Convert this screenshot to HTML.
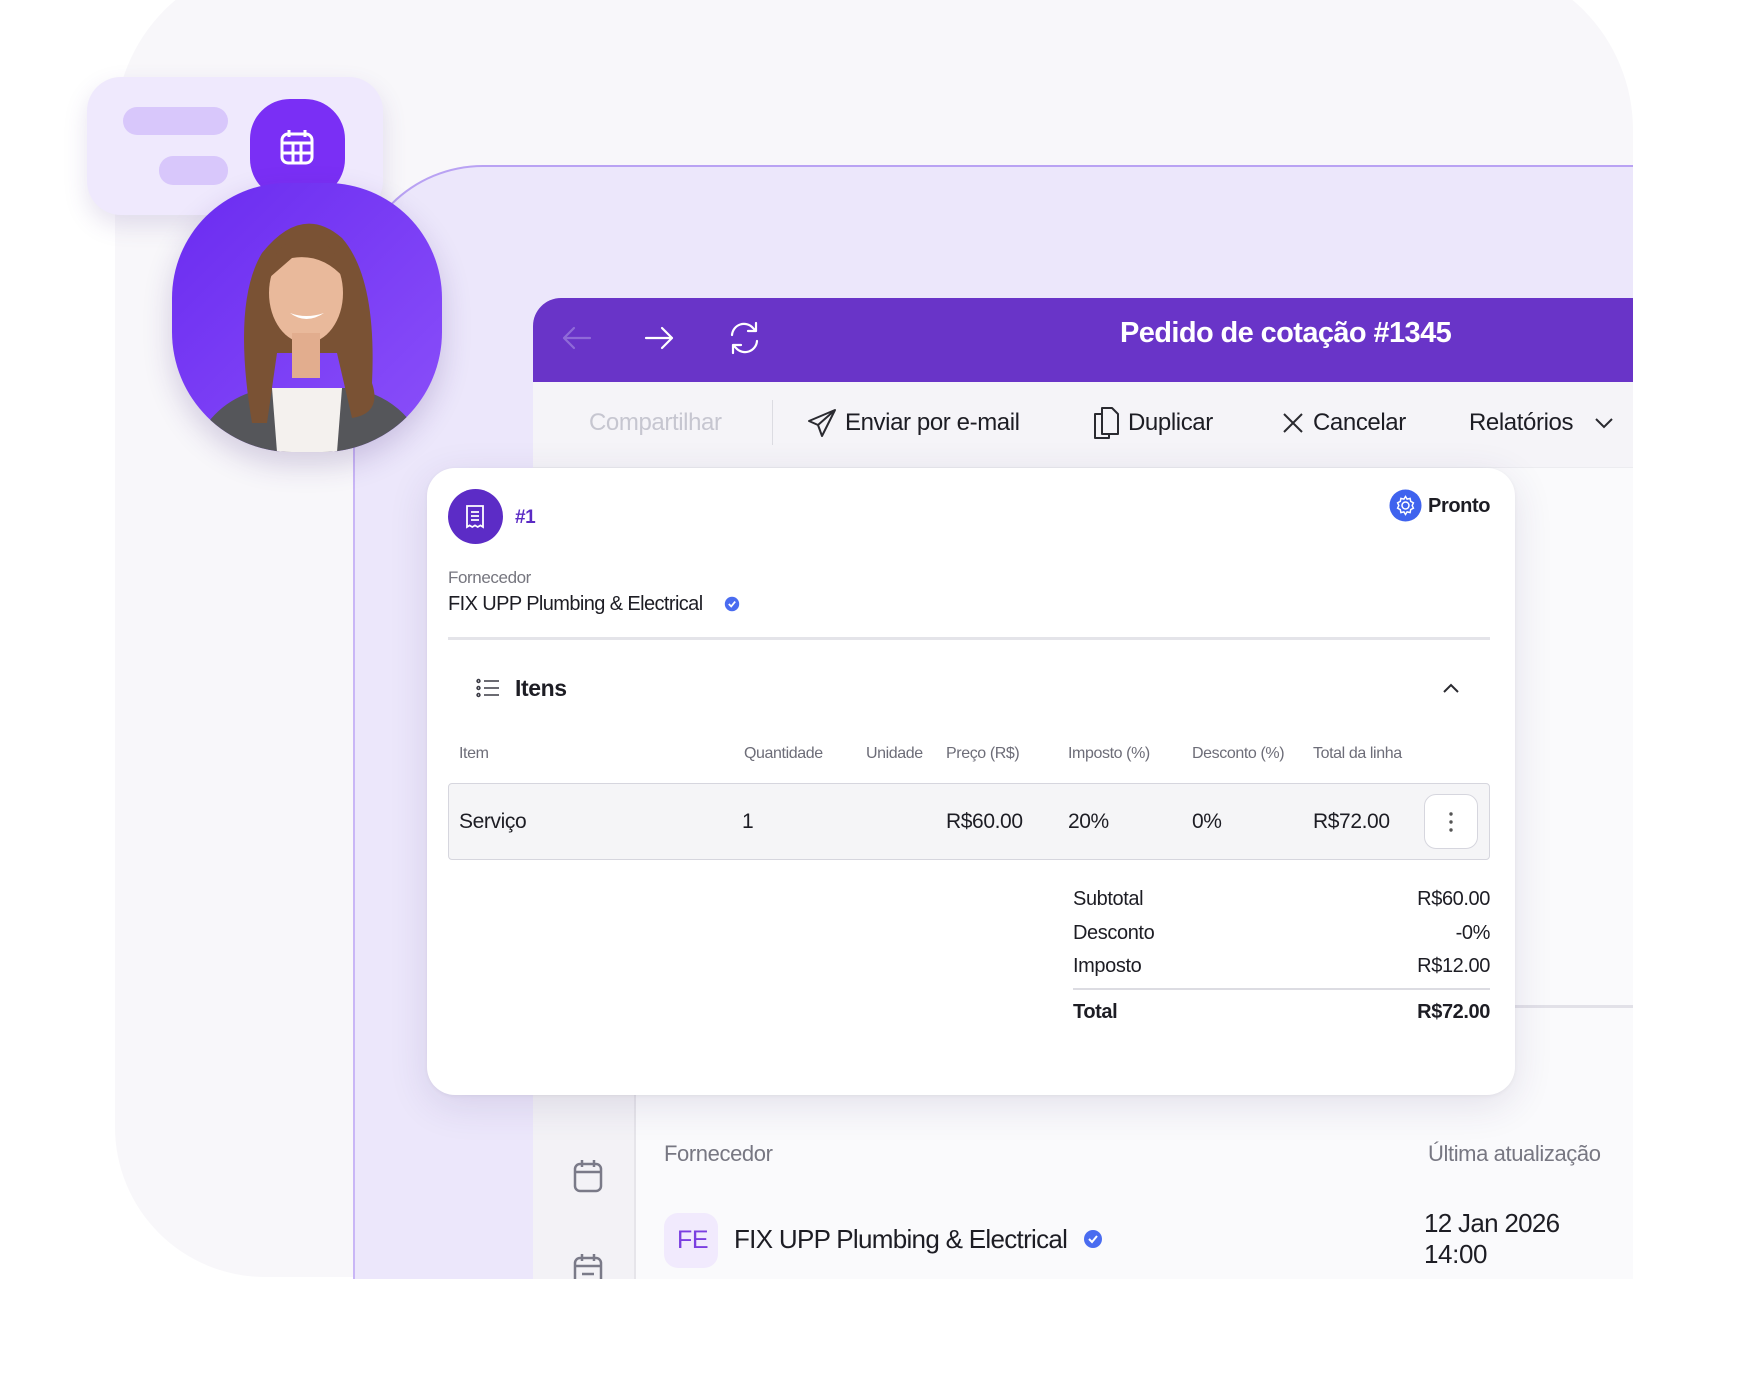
<!DOCTYPE html>
<html><head><meta charset="utf-8">
<style>
*{margin:0;padding:0;box-sizing:border-box}
html{width:1760px;height:1386px;overflow:hidden}
body{width:1760px;height:1386px;background:#fff;position:relative;overflow:hidden;font-family:"Liberation Sans",sans-serif;color:#1d1d24;letter-spacing:-0.4px}
.a{position:absolute}
.t{position:absolute;white-space:nowrap;line-height:1}
.w{position:absolute;left:0;top:0;width:1760px;height:0}
</style></head><body>
<div class="a" style="left:115px;top:-40px;width:1518px;height:1317px;background:#f8f7fa;border-radius:170px 170px 0 150px"></div>
<div class="a" style="left:353px;top:165px;width:1280px;height:1114px;background:#ece7fb;border-top:2px solid #b9a2f3;border-left:2px solid #c9b6f6;border-radius:130px 0 0 0"></div>
<div class="a" style="left:533px;top:298px;width:1100px;height:981px;background:#fafafc;border-radius:28px 0 0 0;overflow:hidden">
  <div class="a" style="left:0;top:0;width:1100px;height:84px;background:#6934c8"></div>
  <div class="a" style="left:0;top:84px;width:1100px;height:86px;background:#f5f4f8;border-bottom:1px solid #ececf0"></div>
  <div class="a" style="left:0;top:170px;width:103px;height:811px;background:#f3f2f6;border-right:2px solid #e6e5ea"></div>
  <div class="a" style="left:978px;top:707px;width:122px;height:3px;background:#e2e1e8"></div>
</div>
<svg class="a" style="left:560px;top:318px" width="210" height="40" viewBox="0 0 210 40" fill="none" stroke-linecap="round" stroke-linejoin="round">
 <path d="M30 20H4M14 10L4 20L14 30" stroke="#8f6ad8" stroke-width="2.2"/>
 <path d="M86 20H112M102 10L112 20L102 30" stroke="#fff" stroke-width="2.2"/>
 <path d="M172 17a12 12 0 0 1 21-7l3 3M196 5v8h-8M197 23a12 12 0 0 1-21 7l-3-3M173 35v-8h8" stroke="#fff" stroke-width="2.2"/>
</svg>
<div class="t" style="left:1120px;top:319px;font-size:29px;font-weight:bold;color:#fff;letter-spacing:-0.6px">Pedido de cotação #1345</div>
<div class="t" style="left:589px;top:411px;font-size:24px;color:#c6c6d0">Compartilhar</div>
<div class="a" style="left:772px;top:400px;width:1px;height:45px;background:#dcdce2"></div>
<svg class="a" style="left:806px;top:407px" width="32" height="32" viewBox="0 0 32 32" fill="none" stroke="#2a2a30" stroke-width="2" stroke-linejoin="round"><path d="M29 3L3 14l9 4 4 11z M29 3L12 18"/></svg>
<div class="t" style="left:845px;top:411px;font-size:24px">Enviar por e-mail</div>
<svg class="a" style="left:1092px;top:406px" width="30" height="34" viewBox="0 0 30 34" fill="none" stroke="#2a2a30" stroke-width="2" stroke-linejoin="round"><path d="M9 8H3v24h14v-4"/><path d="M10 2h10l6 6v20H10z"/></svg>
<div class="t" style="left:1128px;top:411px;font-size:24px">Duplicar</div>
<svg class="a" style="left:1282px;top:412px" width="22" height="22" viewBox="0 0 22 22" stroke="#2a2a30" stroke-width="2"><path d="M2 2L20 20M20 2L2 20"/></svg>
<div class="t" style="left:1313px;top:411px;font-size:24px">Cancelar</div>
<div class="t" style="left:1469px;top:411px;font-size:24px">Relatórios</div>
<svg class="a" style="left:1594px;top:416px" width="20" height="14" viewBox="0 0 20 14" fill="none" stroke="#2a2a30" stroke-width="2"><path d="M2 3l8 8 8-8"/></svg>
<svg class="a" style="left:572px;top:1158px" width="32" height="36" viewBox="0 0 32 36" fill="none" stroke="#7a7a88" stroke-width="2.5"><rect x="3" y="6" width="26" height="27" rx="5"/><path d="M3 14h26M10 2v7M22 2v7"/></svg>
<svg class="a" style="left:572px;top:1252px" width="32" height="27" viewBox="0 0 32 27" fill="none" stroke="#7a7a88" stroke-width="2.5"><rect x="3" y="6" width="26" height="27" rx="5"/><path d="M3 14h26M10 2v7M22 2v7M10 22h12"/></svg>
<div class="t" style="left:664px;top:1143px;font-size:22px;color:#777782">Fornecedor</div>
<div class="t" style="left:1428px;top:1143px;font-size:22px;color:#777782">Última atualização</div>
<div class="a" style="left:664px;top:1213px;width:54px;height:55px;background:#f1eafd;border-radius:14px"></div>
<div class="t" style="left:677px;top:1228px;font-size:25px;color:#7b3fe0">FE</div>
<div class="t" style="left:734px;top:1226px;font-size:26px;color:#1d1d24;letter-spacing:-0.7px">FIX UPP Plumbing &amp; Electrical</div>
<svg class="a" style="left:1083px;top:1229px" width="20" height="20" viewBox="0 0 20 20"><circle cx="10" cy="10" r="9" fill="#4a6cf0"/><path d="M6 10l3 3 5-6" fill="none" stroke="#fff" stroke-width="2"/></svg>
<div class="t" style="left:1424px;top:1210px;font-size:26px;letter-spacing:-0.7px">12 Jan 2026</div>
<div class="t" style="left:1424px;top:1241px;font-size:26px">14:00</div>
<div class="a" style="left:427px;top:468px;width:1088px;height:627px;background:#fff;border-radius:28px;box-shadow:0 10px 40px rgba(60,40,110,.12),0 1px 4px rgba(0,0,0,.05)"></div>
<div class="a" style="left:448px;top:489px;width:55px;height:55px;background:#5c2cc6;border-radius:50%"></div>
<svg class="a" style="left:464px;top:504px" width="22" height="26" viewBox="0 0 22 26" fill="none" stroke="#fff" stroke-width="1.8"><path d="M3 2h16v21l-2.6-1.6L13.7 23 11 21.4 8.3 23 5.6 21.4 3 23z"/><path d="M7 8h8M7 12h8M7 16h8"/></svg>
<div class="t" style="left:515px;top:508px;font-size:19px;font-weight:bold;color:#5b2bc4">#1</div>
<svg class="a" style="left:1389px;top:489px" width="33" height="33" viewBox="0 0 33 33"><circle cx="16.5" cy="16.5" r="16" fill="#3f63ee"/><g fill="none" stroke="#fff" stroke-width="1.5"><circle cx="16.5" cy="16.5" r="3.5"/><path d="M16.5 7.5l1.6 2.6 3-.7.6 3 2.7 1.4-1.2 2.7 1.2 2.7-2.7 1.4-.6 3-3-.7-1.6 2.6-1.6-2.6-3 .7-.6-3-2.7-1.4 1.2-2.7-1.200-2.7 2.7-1.4.6-3 3 .7z"/></g></svg>
<div class="t" style="left:1428px;top:496px;font-size:20px;font-weight:bold">Pronto</div>
<div class="t" style="left:448px;top:569px;font-size:17px;color:#76767f">Fornecedor</div>
<div class="t" style="left:448px;top:594px;font-size:20px;letter-spacing:-0.6px">FIX UPP Plumbing &amp; Electrical</div>
<svg class="a" style="left:724px;top:596px" width="16" height="16" viewBox="0 0 20 20"><circle cx="10" cy="10" r="9" fill="#4a6cf0"/><path d="M6 10l3 3 5-6" fill="none" stroke="#fff" stroke-width="2.2"/></svg>
<div class="a" style="left:448px;top:637px;width:1042px;height:3px;background:#e4e4e9"></div>
<svg class="a" style="left:476px;top:678px" width="24" height="20" viewBox="0 0 24 20" fill="none" stroke="#3a3a44" stroke-width="1.6"><circle cx="2.5" cy="3" r="1.4"/><circle cx="2.5" cy="10" r="1.4"/><circle cx="2.5" cy="17" r="1.4"/><path d="M8 3h15M8 10h15M8 17h15"/></svg>
<div class="t" style="left:515px;top:677px;font-size:23px;font-weight:bold">Itens</div>
<svg class="a" style="left:1442px;top:682px" width="18" height="12" viewBox="0 0 18 12" fill="none" stroke="#2a2a30" stroke-width="2"><path d="M2 10l7-7 7 7"/></svg>
<div class="w" style="top:746px;font-size:16px;color:#6d6d78">
<span class="t" style="left:459px">Item</span><span class="t" style="left:744px">Quantidade</span><span class="t" style="left:866px">Unidade</span><span class="t" style="left:946px">Preço (R$)</span><span class="t" style="left:1068px">Imposto (%)</span><span class="t" style="left:1192px">Desconto (%)</span><span class="t" style="left:1313px">Total da linha</span></div>
<div class="a" style="left:448px;top:783px;width:1042px;height:77px;background:#f5f5f7;border:1.5px solid #d6d6de;border-radius:4px"></div>
<div class="w" style="top:811px;font-size:21px">
<span class="t" style="left:459px">Serviço</span><span class="t" style="left:742px">1</span><span class="t" style="left:946px">R$60.00</span><span class="t" style="left:1068px">20%</span><span class="t" style="left:1192px">0%</span><span class="t" style="left:1313px">R$72.00</span></div>
<div class="a" style="left:1424px;top:794px;width:54px;height:55px;background:#fff;border:1.5px solid #d6d6de;border-radius:12px"></div>
<svg class="a" style="left:1447px;top:811px" width="8" height="22" viewBox="0 0 8 22" fill="#555"><circle cx="4" cy="3" r="1.7"/><circle cx="4" cy="11" r="1.7"/><circle cx="4" cy="19" r="1.7"/></svg>
<div class="w" style="font-size:20px">
<span class="t" style="left:1073px;top:889px">Subtotal</span><span class="t" style="right:270px;top:889px">R$60.00</span>
<span class="t" style="left:1073px;top:923px">Desconto</span><span class="t" style="right:270px;top:923px">-0%</span>
<span class="t" style="left:1073px;top:956px">Imposto</span><span class="t" style="right:270px;top:956px">R$12.00</span>
<span class="t" style="left:1073px;top:1002px;font-weight:bold">Total</span><span class="t" style="right:270px;top:1002px;font-weight:bold">R$72.00</span></div>
<div class="a" style="left:1073px;top:988px;width:417px;height:1.5px;background:#dcdce2"></div>
<div class="a" style="left:87px;top:77px;width:296px;height:138px;background:#efe9fd;border-radius:34px;box-shadow:0 10px 24px rgba(90,60,150,.15)"></div>
<div class="a" style="left:123px;top:107px;width:105px;height:28px;background:#d8c7fb;border-radius:14px"></div>
<div class="a" style="left:159px;top:156px;width:69px;height:29px;background:#d8c7fb;border-radius:14px"></div>
<div class="a" style="left:250px;top:99px;width:95px;height:100px;background:#7a2ff5;border-radius:40px"></div>
<svg class="a" style="left:279px;top:128px" width="36" height="38" viewBox="0 0 36 38" fill="none" stroke="#fff" stroke-width="3"><rect x="3" y="6" width="30" height="29" rx="6"/><path d="M3 15h30M3 25h30M14 15v20M22 15v20M10 2v7M26 2v7"/></svg>
<div class="a" style="left:172px;top:183px;width:270px;height:269px;border-radius:115px 115px 120px 120px;background:linear-gradient(135deg,#6a2bf0,#8b50fa);overflow:hidden;box-shadow:0 12px 30px rgba(60,30,120,.2)">
<svg width="270" height="269" viewBox="0 0 270 269">
 <path d="M20 269 Q40 215 95 205 L180 205 Q235 215 255 269Z" fill="#55565a"/>
 <path d="M100 205 L170 205 L165 269 L105 269Z" fill="#f4f1ee"/>
 <path d="M80 240 Q60 120 90 70 Q130 20 170 55 Q205 95 200 200 Q210 230 180 235 L165 170 L105 170 L95 240Z" fill="#7a5234"/>
 <ellipse cx="134" cy="110" rx="37" ry="50" fill="#e9b99b"/>
 <rect x="120" y="150" width="28" height="45" fill="#e2ad8e"/>
 <path d="M118 130 Q134 142 152 130 Q134 136 118 130Z" fill="#fff"/>
 <path d="M97 95 Q100 55 140 55 Q165 60 172 95 Q150 70 120 75Z" fill="#7a5234"/>
</svg></div>
</body></html>
